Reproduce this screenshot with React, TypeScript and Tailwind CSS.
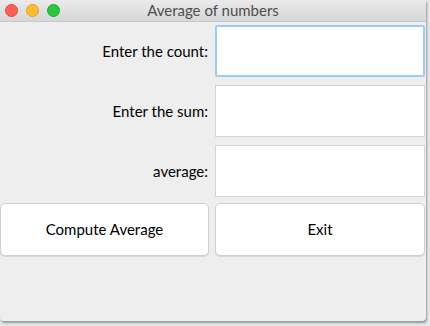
export default function App() {
  const font = { fontFamily: '"Lato", "Liberation Sans", sans-serif' };
  return (
    <div className="flex h-[326px] w-[430px] flex-col bg-[#e4e6e8]" style={font}>
      <div className="flex h-[321px] w-[426px] flex-col overflow-hidden rounded-b-[4px] bg-[#eeeeee] shadow-[1px_2px_2px_#9a9a9a]">
        <div className="relative flex h-[22px] items-center border-b border-[#c8c8c8] bg-gradient-to-b from-[#ebebeb] to-[#d6d6d6]">
          <div className="flex gap-[8px] pl-[5px]">
            <span className="h-[13px] w-[13px] rounded-full border border-[#e0443e] bg-[#fe5f57]" />
            <span className="h-[13px] w-[13px] rounded-full border border-[#dea123] bg-[#febc2e]" />
            <span className="h-[13px] w-[13px] rounded-full border border-[#1aab29] bg-[#28c840]" />
          </div>
          <span className="absolute left-0 right-0 text-center text-[15px] text-[#4d4d4d]">
            Average of numbers
          </span>
        </div>
        <div className="grid grid-cols-[209px_210px] gap-x-[6px] pt-[3px]">
          <span className="flex h-[52px] items-center justify-end pr-[1px] text-[15px] text-black">
            Enter the count:
          </span>
          <div className="h-[52px] rounded-[2px] border-2 border-[#9fcaf3] bg-white" />
          <span className="mt-[8px] flex h-[52px] items-center justify-end pr-[1px] text-[15px] text-black">
            Enter the sum:
          </span>
          <div className="mt-[8px] h-[52px] border border-[#d4d4d4] bg-white" />
          <span className="mt-[8px] flex h-[52px] items-center justify-end pr-[1px] text-[15px] text-black">
            average:
          </span>
          <div className="mt-[8px] h-[52px] border border-[#d4d4d4] bg-white" />
          <button className="mt-[6px] h-[53px] rounded-[5px] border border-[#cfcfcf] bg-white text-[15px] text-black shadow-[0_1px_0_#d8d8d8]">
            Compute Average
          </button>
          <button className="mt-[6px] h-[53px] rounded-[5px] border border-[#cfcfcf] bg-white text-[15px] text-black shadow-[0_1px_0_#d8d8d8]">
            Exit
          </button>
        </div>
      </div>
    </div>
  );
}
